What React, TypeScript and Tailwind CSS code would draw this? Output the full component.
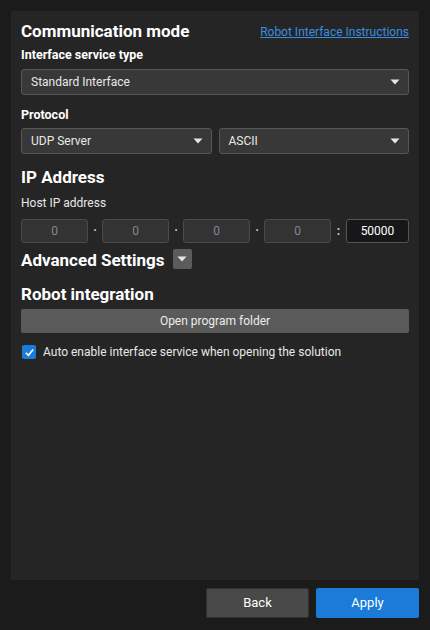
const FONT = { fontFamily: 'Roboto, "Noto Sans", Arial, sans-serif' };

function Caret() {
  return (
    <svg width="10" height="6" viewBox="0 0 10 6" className="shrink-0">
      <path d="M0.5 0.5 H9.5 L5 5.5 Z" fill="#e6e6e6" />
    </svg>
  );
}

function Select({ value, className = "" }: { value: string; className?: string }) {
  return (
    <div
      className={`h-[26px] flex items-center justify-between pl-[9px] pr-[8px] bg-[#383838] border border-[#575757] rounded-[3px] text-[12px] text-[#e8e8e8] ${className}`}
    >
      <span>{value}</span>
      <Caret />
    </div>
  );
}

function IpBox() {
  return (
    <div className="w-[67px] h-[24px] flex items-center justify-center bg-[#333333] border border-[#4b4b4b] rounded-[3px] text-[12px] text-[#7d8894]">
      0
    </div>
  );
}

function Dot() {
  return <div className="w-[14px] flex items-center justify-center text-[#d0d0d0] text-[12px] font-bold">·</div>;
}

export default function App() {
  return (
    <div className="w-[430px] h-[630px] bg-[#1b1b1b] flex flex-col" style={FONT}>
      <div className="mx-[11px] mt-[11px] h-[569px] bg-[#252525] px-[10px] pt-[10px] flex flex-col">
        <div className="flex items-center justify-between h-[22px]">
          <h2 className="text-[17px] font-bold text-white">Communication mode</h2>
          <a className="text-[12px] text-[#3a8ee0] underline cursor-pointer">Robot Interface Instructions</a>
        </div>

        <div className="mt-[4px] h-[16px] flex items-center text-[12.5px] font-bold text-white">Interface service type</div>
        <Select value="Standard Interface" className="mt-[6px]" />

        <div className="mt-[12px] h-[16px] flex items-center text-[12.5px] font-bold text-white">Protocol</div>
        <div className="mt-[5px] flex gap-[7px]">
          <Select value="UDP Server" className="flex-1" />
          <Select value="ASCII" className="flex-1" />
        </div>

        <h2 className="mt-[13px] h-[22px] flex items-center text-[17px] font-bold text-white">IP Address</h2>
        <div className="mt-[6px] h-[16px] flex items-center text-[12px] text-[#e8e8e8]">Host IP address</div>
        <div className="mt-[8px] flex items-center">
          <IpBox />
          <Dot />
          <IpBox />
          <Dot />
          <IpBox />
          <Dot />
          <IpBox />
          <div className="w-[15px] flex items-center justify-center text-[#d0d0d0] text-[12px] font-bold">:</div>
          <div className="flex-1 h-[24px] flex items-center justify-center bg-[#171717] border border-[#555555] rounded-[3px] text-[12px] text-white">
            50000
          </div>
        </div>

        <div className="mt-[6px] h-[20px] flex items-center gap-[8px]">
          <h2 className="text-[17px] leading-[20px] mt-[2px] font-bold text-white">Advanced Settings</h2>
          <div className="w-[19px] h-[20px] bg-[#5c5c5c] rounded-[2px] flex items-center justify-center">
            <Caret />
          </div>
        </div>

        <h2 className="mt-[15px] h-[22px] flex items-center text-[17px] font-bold text-white">Robot integration</h2>
        <button className="mt-[3px] h-[24px] w-full bg-[#5a5a5a] rounded-[2px] text-[12px] text-[#ececec]">
          Open program folder
        </button>

        <label className="mt-[12px] h-[14px] flex items-center gap-[7px] pl-[1px]">
          <span className="w-[14px] h-[14px] bg-[#1b7bd8] rounded-[2px] flex items-center justify-center">
            <svg width="11" height="11" viewBox="0 0 12 12">
              <path d="M2 6.3 L4.8 9 L10 2.8" fill="none" stroke="white" strokeWidth="1.8" />
            </svg>
          </span>
          <span className="text-[12px] leading-[14px] text-[#e8e8e8]">Auto enable interface service when opening the solution</span>
        </label>
      </div>

      <div className="mt-[8px] mr-[11px] flex justify-end gap-[7px]">
        <button className="w-[103px] h-[30px] bg-[#484848] border border-[#333333] rounded-[2px] text-[13px] text-white">
          Back
        </button>
        <button className="w-[103px] h-[30px] bg-[#1a7bd8] rounded-[2px] text-[13px] text-white">Apply</button>
      </div>
    </div>
  );
}
